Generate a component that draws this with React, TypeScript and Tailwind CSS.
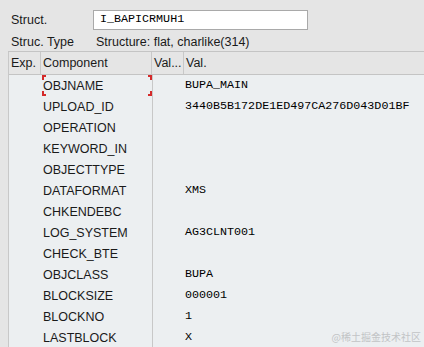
const rows: [string, string][] = [
  ["OBJNAME", "BUPA_MAIN"],
  ["UPLOAD_ID", "3440B5B172DE1ED497CA276D043D01BF"],
  ["OPERATION", ""],
  ["KEYWORD_IN", ""],
  ["OBJECTTYPE", ""],
  ["DATAFORMAT", "XMS"],
  ["CHKENDEBC", ""],
  ["LOG_SYSTEM", "AG3CLNT001"],
  ["CHECK_BTE", ""],
  ["OBJCLASS", "BUPA"],
  ["BLOCKSIZE", "000001"],
  ["BLOCKNO", "1"],
  ["LASTBLOCK", "X"],
];

function Corners() {
  return (
    <>
      <span className="absolute left-0 top-0 w-[4px] h-[5px] border-l-2 border-t-2 border-[#d42a2a]" />
      <span className="absolute right-0 top-0 w-[4px] h-[5px] border-r-2 border-t-2 border-[#d42a2a]" />
      <span className="absolute left-0 bottom-0 w-[4px] h-[5px] border-l-2 border-b-2 border-[#d42a2a]" />
      <span className="absolute right-0 bottom-0 w-[4px] h-[5px] border-r-2 border-b-2 border-[#d42a2a]" />
    </>
  );
}

export default function App() {
  return (
    <div
      className="w-[424px] h-[347px] overflow-hidden bg-[#e5e5e5] text-[12.5px] text-[#1a1a1a] relative"
      style={{ fontFamily: '"Liberation Sans", Arial, sans-serif' }}
    >
      <div className="flex items-center h-[38px] pt-[1px]">
        <div className="w-[93px] pl-[11px] pt-[1px]">Struct.</div>
        <div
          className="w-[215px] h-[20px] bg-white border border-[#a9a9a9] pl-[6px] flex items-center text-[11.7px] text-black"
          style={{ fontFamily: '"Liberation Mono", "Courier New", monospace' }}
        >
          I_BAPICRMUH1
        </div>
      </div>
      <div className="flex items-center h-[13px] -mt-[2px]">
        <div className="w-[85px] pl-[11px]">Struc. Type</div>
        <div className="pl-[11px]">Structure: flat, charlike(314)</div>
      </div>
      <div className="mt-[2px] border-t border-[#c4c4c4] ml-[8px] h-0" />
      <div className="ml-[8px] border-l border-[#c8c8c8] h-[300px]">
        <div className="flex h-[23px] items-center border-b border-[#c4c4c4]">
          <div className="w-[32px] pl-[2px] h-full flex items-center border-r border-[#c8c8c8]">Exp.</div>
          <div className="w-[111px] pl-[2px] h-full flex items-center border-r border-[#c8c8c8]">Component</div>
          <div className="w-[32px] pl-[2px] h-full flex items-center border-r border-[#c8c8c8]">Val...</div>
          <div className="pl-[2px]">Val.</div>
        </div>
        <div className="bg-[#eceff1] h-full flex flex-col">
          {rows.map(([name, val], i) => (
            <div key={name} className="flex h-[21px] shrink-0 items-center">
              <div className="w-[33px]" />
              <div className="w-[111px] h-full flex items-center pl-[1px] pt-[1px] relative border-r border-[#c8c8c8]">
                {i === 0 && <Corners />}
                {name}
              </div>
              <div
                className="pl-[32px] pt-[1px] text-[11.7px] text-black"
                style={{ fontFamily: '"Liberation Mono", "Courier New", monospace' }}
              >
                {val}
              </div>
            </div>
          ))}
        </div>
      </div>
      <div
        className="absolute right-[3px] bottom-[3px] text-[10px] text-[#c2c4c6]"
        style={{ fontFamily: '"Noto Sans CJK SC", sans-serif' }}
      >
        @稀土掘金技术社区
      </div>
    </div>
  );
}
